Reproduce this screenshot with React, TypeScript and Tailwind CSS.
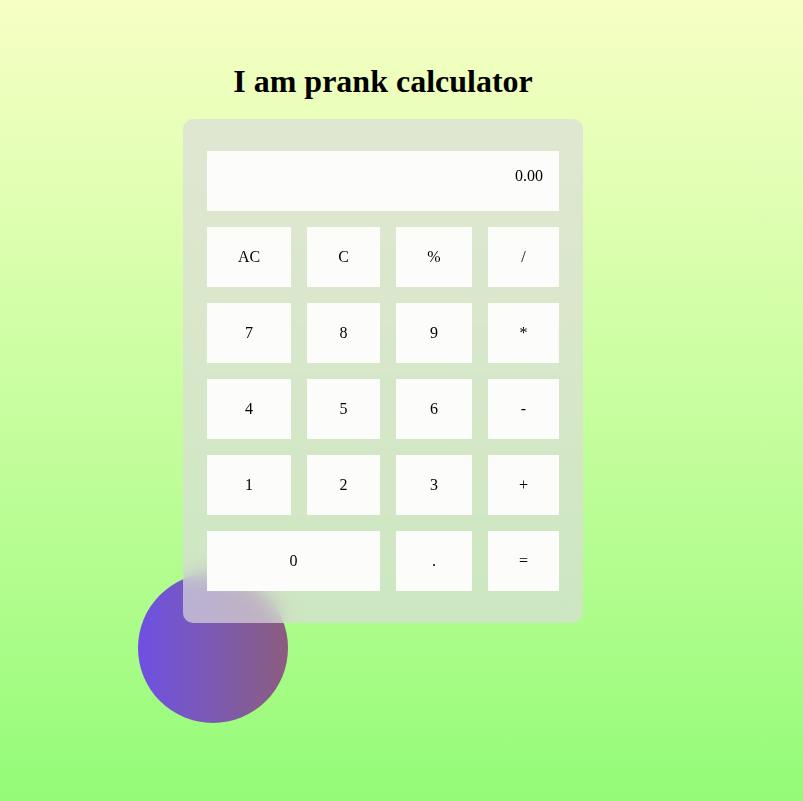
import React from 'react';

const keys: { label: string; wide?: boolean }[] = [
  { label: 'AC' }, { label: 'C' }, { label: '%' }, { label: '/' },
  { label: '7' }, { label: '8' }, { label: '9' }, { label: '*' },
  { label: '4' }, { label: '5' }, { label: '6' }, { label: '-' },
  { label: '1' }, { label: '2' }, { label: '3' }, { label: '+' },
  { label: '0', wide: true }, { label: '.' }, { label: '=' },
];

const App: React.FC = () => {
  return (
    <div
      className="relative min-h-[801px] w-full overflow-hidden bg-gradient-to-b from-[#f6ffc4] to-[#93fb77] text-black"
      style={{ fontFamily: '"Liberation Serif", "Times New Roman", serif' }}
    >
      {/* decorative blob behind the glass panel */}
      <div className="absolute left-[138px] top-[573px] h-[150px] w-[150px] rounded-full bg-gradient-to-r from-[#6e4fe4] to-[#8c5b7e]" />

      <div className="relative ml-[183px] flex w-[400px] flex-col items-center pt-[63px]">
        <h1 className="mb-[19px] text-[32px] font-bold leading-[37px]">I am prank calculator</h1>

        <div className="flex w-[400px] flex-col gap-4 rounded-[10px] bg-[rgba(220,220,220,0.68)] px-6 py-8 backdrop-blur-[10px]">
          <div className="flex h-[60px] items-start justify-end bg-[#fcfcfa] pr-4 pt-4 text-base leading-[18px]">0.00</div>

          <div className="grid grid-cols-[84px_73px_76px_71px] gap-4">
            {keys.map((k) => (
              <button
                key={k.label}
                className={`flex h-[60px] items-center justify-center bg-[#fcfdfb] text-base ${k.wide ? 'col-span-2' : ''}`}
              >
                {k.label}
              </button>
            ))}
          </div>
        </div>
      </div>
    </div>
  );
};

export default App;
